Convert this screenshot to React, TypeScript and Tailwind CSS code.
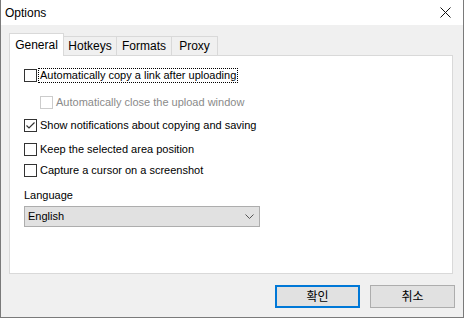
import { useState } from 'react';

const font = { fontFamily: '"Liberation Sans", "Noto Sans CJK KR", sans-serif' };

function CheckIcon() {
  return (
    <svg width="11" height="11" viewBox="0 0 11 11" className="block">
      <path d="M1.5 5.5 L4 8 L9.5 2.5" fill="none" stroke="#333" strokeWidth="1.2" />
    </svg>
  );
}

interface CheckRowProps {
  label: string;
  checked?: boolean;
  disabled?: boolean;
  focused?: boolean;
  className?: string;
}

function CheckRow({ label, checked = false, disabled = false, focused = false, className = '' }: CheckRowProps) {
  return (
    <div className={`flex items-center h-[14px] ${className}`}>
      <div
        className={`w-[13px] h-[13px] flex items-center justify-center bg-white border ${
          disabled ? 'border-[#cccccc]' : 'border-[#333333]'
        }`}
      >
        {checked && <CheckIcon />}
      </div>
      <span
        className={`ml-[2px] px-px leading-[13px] text-[11px] ${
          disabled ? 'text-[#8a8a8a]' : 'text-black'
        } ${focused ? 'outline outline-1 outline-dotted outline-black' : ''}`}
      >
        {label}
      </span>
    </div>
  );
}

const tabs = [
  { name: 'General', w: 'w-[55px]' },
  { name: 'Hotkeys', w: 'w-[53px]' },
  { name: 'Formats', w: 'w-[55px]' },
  { name: 'Proxy', w: 'w-[46px]' },
];

export default function App() {
  const [tab] = useState('General');

  return (
    <div className="w-[464px] h-[318px] flex flex-col bg-[#f0f0f0] border-x border-b border-[#7a7a7a]" style={font}>
      <div className="h-[25px] bg-white flex items-center justify-between pl-[4px] pr-[12px]">
        <span className="text-[12px] text-black">Options</span>
        <svg width="11" height="11" viewBox="0 0 11 11">
          <path d="M0.5 0.5 L10.5 10.5 M10.5 0.5 L0.5 10.5" stroke="#111" strokeWidth="1" />
        </svg>
      </div>

      <div className="flex items-end pl-[8px] mt-[8px] h-[22px]">
        {tabs.map((t) =>
          t.name === tab ? (
            <div
              key={t.name}
              className={`relative z-10 h-[23px] -mb-px ${t.w} bg-white border-x border-t border-[#d9d9d9] flex items-center justify-center pb-px text-[12px] text-black`}
            >
              {t.name}
            </div>
          ) : (
            <div
              key={t.name}
              className={`h-[19px] ${t.w} bg-[#f0f0f0] border-r border-t border-[#d9d9d9] flex items-center justify-center text-[12px] text-black`}
            >
              {t.name}
            </div>
          )
        )}
      </div>

      <div className="ml-[8px] w-[444px] h-[219px] bg-white border border-[#d9d9d9] pl-[14px] pt-[12px]">
        <CheckRow label="Automatically copy a link after uploading" focused />
        <CheckRow label="Automatically close the upload window" disabled className="ml-[16px] mt-[13px]" />
        <CheckRow label="Show notifications about copying and saving" checked className="mt-[9px]" />
        <CheckRow label="Keep the selected area position" className="mt-[10px]" />
        <CheckRow label="Capture a cursor on a screenshot" className="mt-[7px]" />

        <div className="mt-[11px] text-[11px] leading-[14px] text-black">Language</div>
        <div className="mt-[4px] w-[236px] h-[21px] bg-[#e1e1e1] border border-[#adadad] flex items-center justify-between pl-[3px] pr-[5px]">
          <span className="text-[11px] text-black">English</span>
          <svg width="9" height="5" viewBox="0 0 9 5">
            <path d="M0.5 0.5 L4.5 4.5 L8.5 0.5" fill="none" stroke="#555" strokeWidth="1" />
          </svg>
        </div>
      </div>

      <div className="flex justify-end gap-[10px] mt-[11px] pr-[8px]">
        <button className="w-[85px] h-[23px] bg-[#e1e1e1] border-2 border-[#0078d7] text-[12px] text-black">
          확인
        </button>
        <button className="w-[85px] h-[23px] bg-[#e1e1e1] border border-[#adadad] text-[12px] text-black">
          취소
        </button>
      </div>
    </div>
  );
}
